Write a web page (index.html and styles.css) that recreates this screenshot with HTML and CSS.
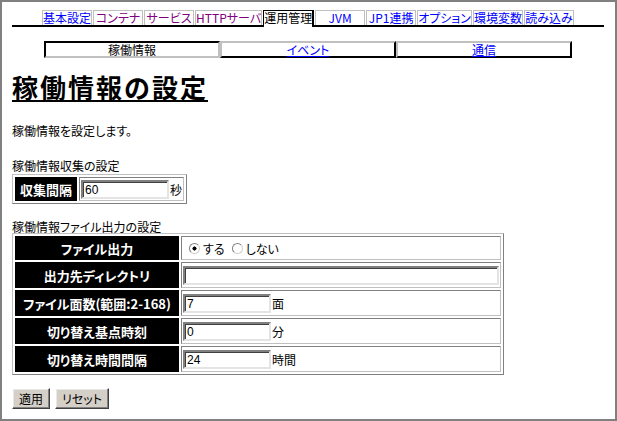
FILE: index.html
```html
<!DOCTYPE html>
<html lang="ja">
<head>
<meta charset="utf-8">
<title>稼働情報の設定</title>
<link rel="stylesheet" href="styles.css">
</head>
<body>
<div class="frame">
  <nav class="tabbar">
    <a class="tab" href="#">基本設定</a>
    <a class="tab visited" href="#">コンテナ</a>
    <a class="tab visited" href="#">サービス</a>
    <a class="tab visited" href="#">HTTPサーバ</a>
    <span class="tab active">運用管理</span>
    <a class="tab" href="#">JVM</a>
    <a class="tab" href="#">JP1連携</a>
    <a class="tab" href="#">オプション</a>
    <a class="tab" href="#">環境変数</a>
    <a class="tab" href="#">読み込み</a>
  </nav>

  <div class="subtabs">
    <span class="subtab active">稼働情報</span>
    <a class="subtab" href="#">イベント</a>
    <a class="subtab" href="#">通信</a>
  </div>

  <h1>稼働情報の設定</h1>
  <p class="desc">稼働情報を設定します。</p>

  <p class="section sec1">稼働情報収集の設定</p>
  <table class="form small">
    <tr>
      <th>収集間隔</th>
      <td><input class="text" type="text" value="60"><span class="unit">秒</span></td>
    </tr>
  </table>

  <p class="section sec2">稼働情報ファイル出力の設定</p>
  <table class="form wide">
    <tr class="r1">
      <th class="head">ファイル出力</th>
      <td><label class="opt"><input class="radio" type="radio" name="out" checked>する</label><label class="opt"><input class="radio" type="radio" name="out">しない</label></td>
    </tr>
    <tr>
      <th>出力先ディレクトリ</th>
      <td><input class="text full" type="text" value=""></td>
    </tr>
    <tr>
      <th>ファイル面数(範囲:2-168)</th>
      <td><input class="text" type="text" value="7"><span class="unit">面</span></td>
    </tr>
    <tr>
      <th>切り替え基点時刻</th>
      <td><input class="text" type="text" value="0"><span class="unit">分</span></td>
    </tr>
    <tr>
      <th>切り替え時間間隔</th>
      <td><input class="text" type="text" value="24"><span class="unit">時間</span></td>
    </tr>
  </table>

  <div class="buttons">
    <button class="btn" type="button">適用</button>
    <button class="btn" type="button">リセット</button>
  </div>
</div>
</body>
</html>
```

FILE: styles.css
```css
* {
  box-sizing: border-box;
}

html,
body {
  margin: 0;
  padding: 0;
  background: #fff;
}

body {
  font-family: "Noto Sans CJK JP", "Liberation Sans", sans-serif;
  font-size: 12px;
  color: #000;
  font-feature-settings: "palt";
}

.frame {
  width: 617px;
  height: 421px;
  border: 2px solid #808080;
  padding: 8px 11px 0 10px;
  overflow: hidden;
}

/* top tabs */
.tabbar {
  display: flex;
  justify-content: center;
  align-items: flex-end;
  height: 17px;
  border-bottom: 2px solid #000;
}

.tab {
  display: block;
  min-width: 50px;
  height: 15px;
  padding: 0;
  margin-right: 1px;
  border: 1px solid #c0c0c0;
  border-bottom: 0;
  line-height: 14px;
  text-align: center;
  color: #0000ff;
  text-decoration: none;
  white-space: nowrap;
}

.tab:last-child {
  margin-right: 0;
}

.tab.visited {
  color: #800080;
}

.tab.active {
  position: relative;
  height: 17px;
  margin-bottom: -2px;
  border-color: #000;
  border-width: 1px 2px 0 1px;
  background: #fff;
  color: #000;
}

/* sub tabs */
.subtabs {
  display: flex;
  width: 528px;
  margin: 14px auto 0;
}

.subtab {
  flex: 1;
  display: block;
  height: 17px;
  border: 2px solid;
  border-color: #c0c0c0 #000 #000 #c0c0c0;
  line-height: 13px;
  text-align: center;
  color: #0000ff;
}

.subtab.active {
  border-color: #000 #c0c0c0 #c0c0c0 #000;
  color: #000;
}

/* heading and texts */
h1 {
  display: inline-block;
  margin: 14px 0 0;
  font-size: 26px;
  line-height: 29px;
  font-weight: bold;
  letter-spacing: 2px;
  font-feature-settings: normal;
  text-decoration: underline;
  text-decoration-thickness: 2px;
  text-underline-offset: 2px;
}

.desc {
  margin: 22px 0 0;
  line-height: 16px;
}

.section {
  margin: 0;
  line-height: 14px;
}

.sec1 {
  margin-top: 20px;
}

.sec2 {
  margin-top: 16px;
}

/* form tables */
table.form {
  border: 1px solid;
  border-color: #c0c0c0 #808080 #808080 #c0c0c0;
  border-collapse: separate;
  border-spacing: 2px;
}

table.small {
  margin-top: 1px;
}

table.small tr {
  height: 24px;
}

table.wide {
  width: 492px;
  margin-top: -1px;
}

table.wide tr {
  height: 26px;
}

table.wide tr.r1 {
  height: 24px;
}

.form th,
.form td {
  box-sizing: content-box;
}

.form th {
  background: #000;
  color: #fff;
  font-size: 13px;
  font-weight: bold;
  padding: 0 4px;
  border: 1px solid #000;
  text-align: center;
  white-space: nowrap;
}

table.wide th {
  width: 158px;
  padding: 0 2px;
}

.form td {
  border: 1px solid;
  border-color: #808080 #c0c0c0 #c0c0c0 #808080;
  padding: 0 1px;
  white-space: nowrap;
}

.text {
  width: 88px;
  height: 19px;
  margin: 0;
  padding: 0 2px;
  border: 2px solid;
  border-color: #808080 #e4e4e4 #e4e4e4 #808080;
  box-shadow: inset 1px 1px 0 #404040;
  font-family: "Liberation Sans", "Noto Sans CJK JP", sans-serif;
  font-size: 12px;
  line-height: 15px;
  vertical-align: middle;
  background: #fff;
  color: #000;
}

.text.full {
  width: 100%;
  display: block;
}

.unit {
  margin-left: 1px;
  vertical-align: middle;
}

.opt {
  display: inline-flex;
  align-items: center;
  margin-left: 3px;
  margin-right: 1px;
}

.radio {
  appearance: none;
  -webkit-appearance: none;
  width: 11px;
  height: 11px;
  margin: 0 3px 0 3px;
  border-radius: 50%;
  border: 1px solid;
  border-color: #808080 #d4d0c8 #d4d0c8 #808080;
  background: #fff;
}

.radio:checked {
  background: radial-gradient(circle, #000 0 1.8px, #fff 2.3px);
}

/* buttons */
.buttons {
  display: flex;
  gap: 5px;
  margin-top: 13px;
}

.btn {
  height: 21px;
  padding: 0 6px;
  margin: 0;
  font-family: "Noto Sans CJK JP", sans-serif;
  font-size: 12px;
  font-feature-settings: "palt";
  line-height: 15px;
  color: #000;
  background: #d4d0c8;
  border: 1px solid;
  border-color: #fff #404040 #404040 #fff;
  box-shadow: inset -1px -1px 0 #808080, inset 1px 1px 0 #e8e8e8;
}
```
